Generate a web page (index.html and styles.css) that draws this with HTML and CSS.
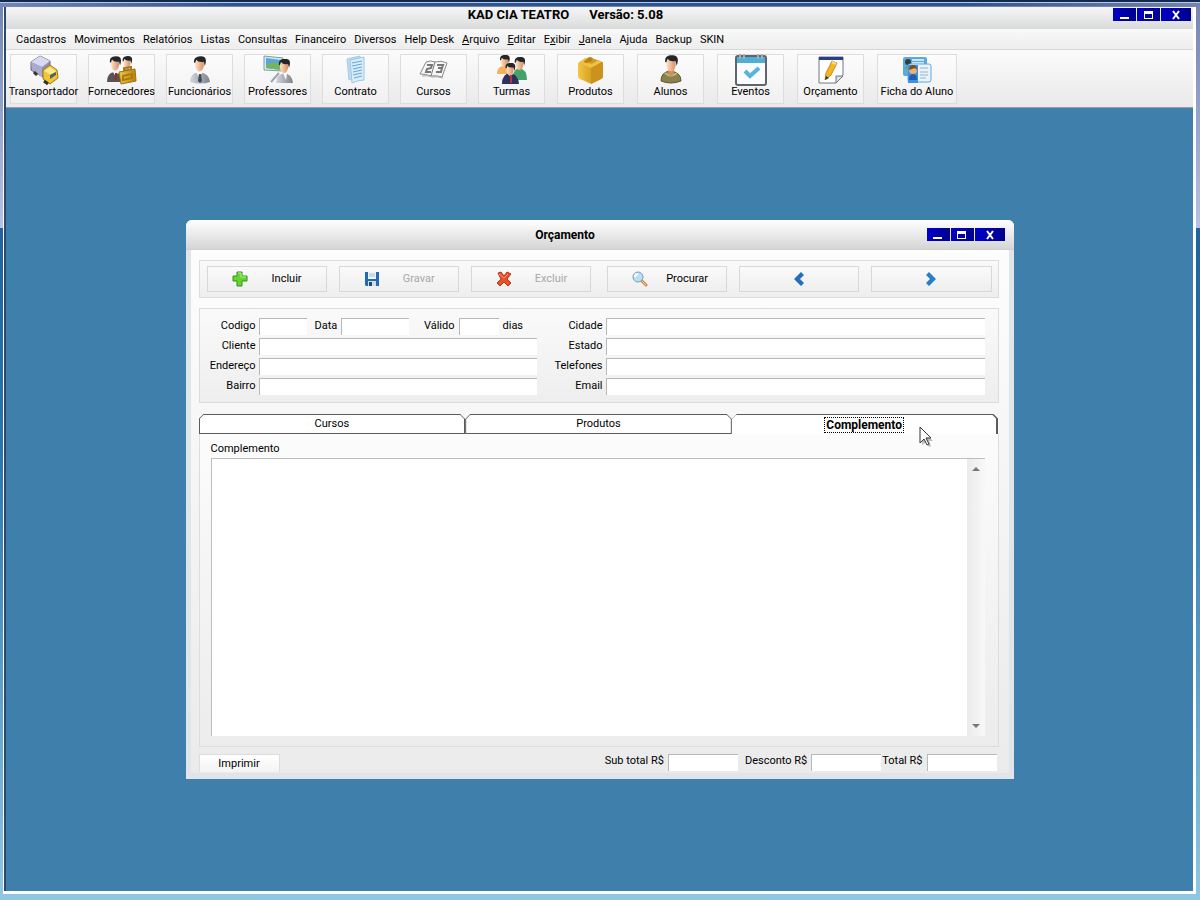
FILE: index.html
```
<!DOCTYPE html>
<html lang="pt-BR">
<head>
  <meta charset="UTF-8" />
  <meta name="viewport" content="width=device-width, initial-scale=1.0"/>
  <title>KAD CIA TEATRO</title>
  <link rel="stylesheet" href="styles.css">
</head>
<body>
  <svg class="defs" width="0" height="0" aria-hidden="true">
    <defs>
      <linearGradient id="skin" x1="0" x2="1"><stop offset="0" stop-color="#ffe2c4"/><stop offset="1" stop-color="#d98f62"/></linearGradient>
      <linearGradient id="gold" x1="0" x2="1"><stop offset="0" stop-color="#f3c63f"/><stop offset="1" stop-color="#b98010"/></linearGradient>
      <linearGradient id="suit" x1="0" x2="1"><stop offset="0" stop-color="#d3d7de"/><stop offset="1" stop-color="#7c828d"/></linearGradient>
      <symbol id="head" viewBox="0 0 14 16">
        <path d="M3 5q0-4 4-4 4 0 4 4v4q-1 5-4 5T3 9z" fill="url(#skin)"/>
        <path d="M2 6Q1 1 6 0q7-1 7 4 0 2-1 5l-1-4Q6 6 4 3L3 6z" fill="#25262a"/>
      </symbol>
      <symbol id="win-min" viewBox="0 0 12 10"><path d="M1 7h9v2H1z" fill="#fff"/></symbol>
      <symbol id="win-max" viewBox="0 0 12 10"><path d="M1 1h9v8H1zM2 4v4h7V4z" fill="#fff" fill-rule="evenodd"/></symbol>
      <symbol id="win-close" viewBox="0 0 12 10"><path d="M3 1l6 8M9 1L3 9" fill="none" stroke="#fff" stroke-width="2"/></symbol>
    </defs>
  </svg>

  <div class="app">
    <header class="titlebar">
      <h1><span>KAD CIA TEATRO</span><span>Versão: 5.08</span></h1>
      <div class="controls">
        <button aria-label="Minimizar"><svg width="12" height="10"><use href="#win-min"/></svg></button>
        <button aria-label="Maximizar"><svg width="12" height="10"><use href="#win-max"/></svg></button>
        <button class="close" aria-label="Fechar"><svg width="12" height="10"><use href="#win-close"/></svg></button>
      </div>
    </header>

    <nav class="menu">
      <a href="#">Cadastros</a>
      <a href="#">Movimentos</a>
      <a href="#">Relatórios</a>
      <a href="#">Listas</a>
      <a href="#">Consultas</a>
      <a href="#">Financeiro</a>
      <a href="#">Diversos</a>
      <a href="#">Help Desk</a>
      <a href="#"><u>A</u>rquivo</a>
      <a href="#"><u>E</u>ditar</a>
      <a href="#">E<u>x</u>ibir</a>
      <a href="#"><u>J</u>anela</a>
      <a href="#">Ajuda</a>
      <a href="#">Backup</a>
      <a href="#">SKIN</a>
    </nav>

    <div class="toolbar">
      <div class="tools">
        <button class="tool">
          <svg width="30" height="30" viewBox="0 0 30 30">
            <path d="M2 7 11 1l10 5v12l-7 4L2 15z" fill="#8e8fb4" stroke="#66688c"/>
            <path d="M2 7 11 1l10 5-8 6z" fill="#d9daf0"/>
            <path d="M2 7l11 5v10L3 15z" fill="#a9aacd"/>
            <path d="M14 15l7-5 7 5 1 8-8 6-7-5z" fill="#efc531" stroke="#a17a12"/>
            <path d="M15 16l6-4 6 4-5 4z" fill="#fbe98a"/>
            <path d="M21 20l6-3v3l-6 4z" fill="#53606e"/>
            <path d="M15 26l4 3M5 17l3 3" stroke="#333" stroke-width="3"/>
          </svg>
          <span>Transportador</span>
        </button>
        <button class="tool">
          <svg width="30" height="30" viewBox="0 0 30 30">
            <path d="M0 27q0-9 7-10 8 1 9 10z" fill="#5c5254"/>
            <path d="M15 20q1-6 6-7 5 1 6 8z" fill="#8a8d96"/>
            <path d="M6 17l3 5 2-5z" fill="#fff"/><path d="M8 18h2v7H8z" fill="#9b2f2b"/>
            <use href="#head" x="1" y="1" width="14" height="17"/>
            <use href="#head" x="14" y="1" width="12" height="14"/>
            <path d="M12 17l16-3 1 12-15 3z" fill="url(#gold)" stroke="#9a7410"/>
            <path d="M17 16v-3l7-1v3M16 21l9-2v4l-9 2z" fill="none" stroke="#a97b10" stroke-width="2"/>
          </svg>
          <span>Fornecedores</span>
        </button>
        <button class="tool">
          <svg width="30" height="30" viewBox="0 0 30 30">
            <path d="M5 27q0-9 9-10 10 1 11 10-9 3-20 0z" fill="url(#suit)"/>
            <path d="M11 17l3 5 4-5z" fill="#fff"/><path d="M14 19h2l1 7-2 2-2-2z" fill="#424a5a"/>
            <use href="#head" x="7" y="1" width="15" height="18"/>
          </svg>
          <span>Funcionários</span>
        </button>
        <button class="tool">
          <svg width="30" height="30" viewBox="0 0 30 30">
            <path d="M1 1l19 2v13L1 15z" fill="#d5e9f4" stroke="#7f9dad"/>
            <path d="M3 3l15 2v10L3 13z" fill="#58a6dc"/><path d="M3 10q7-5 15 0v5L3 13z" fill="#74b55d"/>
            <path d="M13 28q0-8 8-10 8 1 9 10z" fill="url(#suit)"/>
            <path d="M20 18l3 7 1-7z" fill="#fff"/>
            <use href="#head" x="14" y="4" width="14" height="16"/>
            <path d="M8 27l8-9" stroke="#9aa7b5" stroke-width="2"/>
          </svg>
          <span>Professores</span>
        </button>
        <button class="tool">
          <svg width="30" height="30" viewBox="0 0 30 30">
            <path d="M6 4l13-3v19L8 25z" fill="#bcdcf3" stroke="#a4cbea"/>
            <path d="M9 5l14-3v23q-6 0-12 3z" fill="#d8edfa" stroke="#9cc7e6"/>
            <path d="M11 8l10-2M11 11l10-2M12 14l9-2M12 17l9-2M12 20l9-2M13 23l8-2" stroke="#67a7d8"/>
          </svg>
          <span>Contrato</span>
        </button>
        <button class="tool">
          <svg width="30" height="30" viewBox="0 0 30 30">
            <path d="M1 19 7 7q5-2 9 0 6-2 12 1l-5 14q-6-2-11-1-5-2-11-2z" fill="#f7f7f7" stroke="#8a8a8a"/>
            <path d="M16 7l-4 14" stroke="#777"/>
            <path d="M8 10h5l-1 3-4 1-1 3h5M18 10h6l-1 3h-4M23 13l-1 4h-5" fill="none" stroke="#777" stroke-width="2"/>
            <path d="M3 21q6-1 10 1 5-1 11 1" fill="none" stroke="#aaa"/>
          </svg>
          <span>Cursos</span>
        </button>
        <button class="tool">
          <svg width="30" height="30" viewBox="0 0 30 30">
            <path d="M0 19q0-8 7-8t7 8z" fill="#f1b45d"/><path d="M16 25q-1-10 6-12 8 1 8 12z" fill="#43a369"/>
            <use href="#head" x="1" y="0" width="13" height="14"/>
            <use href="#head" x="16" y="2" width="13" height="15"/>
            <path d="M5 29q0-10 8-11 8 1 9 11z" fill="#2d315d"/><path d="M11 18l3 5 2-5z" fill="#fff"/><path d="M13 20h2v8h-2z" fill="#b33"/>
            <use href="#head" x="6" y="8" width="14" height="14"/>
          </svg>
          <span>Turmas</span>
        </button>
      </div>
      <div class="tools wide">
        <button class="tool">
          <svg width="30" height="30" viewBox="0 0 30 30">
            <path d="M2 9q0-2 3-3l8-4 11 4q3 1 3 3v12q0 2-2 3l-8 4q-2 1-4 0l-9-4q-2-1-2-3z" fill="url(#gold)"/>
            <path d="M3 8l6-5 3 2-2 3 6 1 6-4 4 2-11 6z" fill="#eec144"/>
            <path d="M15 13v16l10-5q2-1 2-3V7z" fill="#cb921c"/>
            <path d="M8 6l6-4 3 1-2 4-6 1" fill="#b98014"/>
          </svg>
          <span>Produtos</span>
        </button>
        <button class="tool">
          <svg width="30" height="30" viewBox="0 0 30 30">
            <path d="M5 26q0-9 9-10 11 1 11 10-10 4-20 0z" fill="#89824a" stroke="#60592c"/>
            <path d="M9 18q6 5 12 0" fill="none" stroke="#c0b879" stroke-width="2"/>
            <path d="M12 15h6v4l-3 2-3-2z" fill="#d48b5c"/>
            <use href="#head" x="7" y="0" width="16" height="19"/>
          </svg>
          <span>Alunos</span>
        </button>
        <button class="tool">
          <svg class="tall" width="32" height="32" viewBox="0 0 32 32">
            <rect x="1" y="2" width="30" height="29" rx="2" fill="#fafcfd" stroke="#5e666d" stroke-width="2"/>
            <path d="M2 3h28v6H2z" fill="#4eafd6"/>
            <path d="M5 0v5M9 0v5M23 0v5M27 0v5" stroke="#a9adb1" stroke-width="2"/>
            <path d="M10 17l5 5 9-8" fill="none" stroke="#55b5dc" stroke-width="4"/>
          </svg>
          <span>Eventos</span>
        </button>
        <button class="tool">
          <svg width="30" height="30" viewBox="0 0 30 30">
            <path d="M3 2h24v18l-7 8H3z" fill="#fff" stroke="#707780"/>
            <path d="M3 2h24v3H3z" fill="#263f88"/><path d="M20 28v-7h7z" fill="#dce1e7" stroke="#707780"/>
            <path d="M9 25l1-7 6-12 5 2-6 12z" fill="#f5b524" stroke="#c98a1a"/><path d="M9 25l1-4 3 2z" fill="#333"/><path d="M16 7l4 2" stroke="#f4dfa3" stroke-width="2"/>
          </svg>
          <span>Orçamento</span>
        </button>
        <button class="tool">
          <svg width="30" height="30" viewBox="0 0 30 30">
            <rect x="1" y="2" width="24" height="19" rx="2" fill="#5ba9e4"/>
            <path d="M10 5h12M10 8h12" stroke="#c9e5f8" stroke-width="2"/>
            <circle cx="6" cy="7" r="3" fill="#333f34"/><path d="M3 14q3-6 7 0" fill="#52a45c"/>
            <rect x="6" y="9" width="23" height="18" rx="2" fill="#e8f3fb" stroke="#66a7dc"/>
            <path d="M6 10h10v18H6z" fill="#3f92df"/><circle cx="11" cy="15" r="4" fill="#eeb06d"/><path d="M7 15q0-5 4-5t4 5l-2-2z" fill="#76501e"/><path d="M7 25q0-6 4-6t4 6z" fill="#1f5eb8"/>
            <path d="M18 13h8M18 17h8M18 20h8M18 23h6" stroke="#9db0bd"/>
          </svg>
          <span>Ficha do Aluno</span>
        </button>
      </div>
    </div>

    <main class="workspace">
      <section class="dialog">
        <header class="titlebar">
          <h2>Orçamento</h2>
          <div class="controls">
            <button aria-label="Minimizar"><svg width="12" height="10"><use href="#win-min"/></svg></button>
            <button aria-label="Maximizar"><svg width="12" height="10"><use href="#win-max"/></svg></button>
            <button class="close" aria-label="Fechar"><svg width="12" height="10"><use href="#win-close"/></svg></button>
          </div>
        </header>

        <div class="dialog-body">
          <div class="panel actions">
            <div class="action-group">
              <button>
                <svg width="16" height="16" viewBox="0 0 16 16"><path d="M5 1h5v4h5v5h-5v5H5v-5H1V5h4z" fill="#63d430" stroke="#35911f"/><path d="M6 2h3v4h5" fill="none" stroke="#b4f08c"/></svg>
                <span>Incluir</span>
              </button>
              <button disabled>
                <svg width="16" height="16" viewBox="0 0 16 16"><path d="M1 1h14v14H2l-1-1z" fill="#2469b4"/><path d="M4 1h8v7H4z" fill="#eef4fa"/><path d="M5 3h6M5 5h6" stroke="#a9bdd0"/><path d="M4 10h8v5H4z" fill="#d5dde6"/><path d="M5 11h3v4H5z" fill="#174b86"/></svg>
                <span>Gravar</span>
              </button>
              <button disabled>
                <svg width="16" height="16" viewBox="0 0 16 16"><path d="M2 2l3-1 3 4 3-4 4 2-4 5 4 4-3 3-4-4-4 4-3-3 4-4z" fill="#e9512b" stroke="#b93517"/><path d="M3 3l5 4 4-4" fill="none" stroke="#f99a78"/></svg>
                <span>Excluir</span>
              </button>
            </div>
            <div class="action-group">
              <button>
                <svg width="16" height="16" viewBox="0 0 16 16"><path d="M9 9l5 5" stroke="#d28b45" stroke-width="3" stroke-linecap="round"/><path d="M10 10l4 4" stroke="#f8cb91"/><circle cx="6" cy="6" r="5" fill="#b7e0f6" stroke="#7e9db5"/><path d="M3 6q0-3 3-3" fill="none" stroke="#fff" stroke-width="2"/></svg>
                <span>Procurar</span>
              </button>
              <button class="arrow" aria-label="Anterior"><svg width="16" height="16" viewBox="0 0 16 16"><path d="M10 1l3 3-4 4 4 4-3 3-7-7z" fill="#246fba"/></svg></button>
              <button class="arrow" aria-label="Próximo"><svg width="16" height="16" viewBox="0 0 16 16"><path d="M6 1 3 4l4 4-4 4 3 3 7-7z" fill="#287fc8"/></svg></button>
            </div>
          </div>

          <form class="panel fields">
            <div class="fields-left">
              <label for="codigo">Codigo</label>
              <div class="inline">
                <input type="text" id="codigo" class="w-codigo" />
                <label for="data">Data</label>
                <input type="text" id="data" class="w-data" />
                <label for="valido" class="l-valido">Válido</label>
                <input type="text" id="valido" class="w-valido" />
                <span>dias</span>
              </div>
              <label for="cliente">Cliente</label><input type="text" id="cliente" />
              <label for="endereco">Endereço</label><input type="text" id="endereco" />
              <label for="bairro">Bairro</label><input type="text" id="bairro" />
            </div>
            <div class="fields-right">
              <label for="cidade">Cidade</label><input type="text" id="cidade" />
              <label for="estado">Estado</label><input type="text" id="estado" />
              <label for="telefones">Telefones</label><input type="text" id="telefones" />
              <label for="email">Email</label><input type="text" id="email" />
            </div>
          </form>

          <div class="tabs" role="tablist">
            <button role="tab" aria-selected="false"><span>Cursos</span></button>
            <button role="tab" aria-selected="false"><span>Produtos</span></button>
            <button role="tab" aria-selected="true"><span>Complemento</span></button>
            <svg class="cursor" width="14" height="21" viewBox="0 0 14 21"><path d="M3 4v15l4-3 3 5 2-1-2-5h4z" fill="#bbb"/><path d="M1 1v16l4-4 3 6 2-1-3-6h5z" fill="#fff" stroke="#333"/></svg>
          </div>
          <div class="tab-panel">
            <label for="complemento">Complemento</label>
            <div class="memo">
              <textarea id="complemento"></textarea>
              <div class="scroll">
                <svg width="8" height="4"><path d="M0 4l4-4 4 4z" fill="#777"/></svg>
                <svg width="8" height="4"><path d="M0 0l4 4 4-4z" fill="#777"/></svg>
              </div>
            </div>
          </div>

          <footer class="totals">
            <button>Imprimir</button>
            <label>Sub total R$ <input type="text" /></label>
            <label>Desconto R$ <input type="text" /></label>
            <label class="total">Total R$ <input type="text" /></label>
          </footer>
        </div>
      </section>
    </main>
  </div>
</body>
</html>
```

FILE: styles.css
```
* { box-sizing: border-box; }
body {
  margin: 0;
  padding: 7px 4px 8px 3px;
  min-height: 100vh;
  display: flex;
  font-family: Roboto, "Liberation Sans", sans-serif;
  font-size: 11px;
  line-height: 14px;
  color: #000;
  background:
    linear-gradient(#12294f 0 2px, #b9cbe4 2px 3px, transparent 3px) top / 100% 7px no-repeat,
    linear-gradient(90deg, #7187b8, #2c538c 20%, #2c538c 80%, #7484ac) top / 100% 6px no-repeat,
    linear-gradient(#06304a, #06304a) bottom / 100% 2px no-repeat,
    linear-gradient(#7384b4, #b5c2e2) top / 100% 228px no-repeat,
    linear-gradient(#17538d, #2b75ad 50%, #90c8e2);
}
button, input, textarea { font: inherit; color: inherit; }
button { padding: 0; cursor: pointer; }
.defs { position: absolute; }

.app { flex: 1; display: flex; flex-direction: column; padding-left: 2px; border: 0 solid #fff; border-width: 0 3px 3px 1px; background: #2b4a6a; }

/* title bars */
.titlebar { display: grid; grid-template-columns: 1fr auto 1fr; align-items: center; height: 22px; padding-right: 2px; background: linear-gradient(#f6f6f6, #d9dada); }
h1, h2 { grid-column: 2; margin: 0; padding-right: 66px; font-size: 12px; line-height: 14px; font-weight: bold; }
h1 { display: flex; gap: 20px; font-size: 13px; }
.controls { justify-self: end; display: flex; gap: 1px; }
.controls button { display: grid; place-items: center; width: 23px; height: 13px; border: 0; background: linear-gradient(90deg, #0000c8, #00008c); }
.controls .close { width: 30px; }
.app > .titlebar { align-items: start; padding-top: 1px; }

.menu { display: flex; flex-wrap: wrap; gap: 0 8px; padding: 4px 10px 2px; background: linear-gradient(#f9f9f9, #ededed); border-bottom: 1px solid #d8d8d8; }
.menu a { color: #000; text-decoration: none; }

.toolbar { display: flex; flex-wrap: wrap; gap: 12px; padding: 4px 4px 3px; background: linear-gradient(#fbfbfb, #e9e9e9); border-bottom: 1px solid #9a9aa8; }
.tools { display: flex; gap: 11px; }
.wide { gap: 13px; }
.tool { display: flex; flex-direction: column; align-items: center; width: 67px; height: 50px; border: 1px solid #ddd; background: linear-gradient(#fcfcfc, #f0f0f0); white-space: nowrap; }
.wide .tool:last-child { width: 80px; }
.tall { margin: -1px 0; }

.workspace { flex: 1; padding: 112px 20px; background: #3e80ab; }

/* budget window */
.dialog { max-width: 828px; margin: 0 auto; background: #dfe5e8; border-radius: 6px 6px 0 0; overflow: hidden; }
.dialog .titlebar { height: 30px; padding-right: 9px; border-bottom: 1px solid #d0d0d0; background: linear-gradient(#fff, #d5d5d5); }
.dialog h2 { padding-right: 60px; }
.dialog-body { margin: 0 5px 6px; padding: 10px 10px 1px 8px; background: linear-gradient(#fdfdfd, #ebebeb); }
.panel { border: 1px solid #dcdcdc; background: linear-gradient(#fafafa, #eee); }

.actions { display: flex; gap: 16px; padding: 5px 6px 5px 7px; margin-bottom: 10px; }
.action-group { flex: 1; display: flex; gap: 12px; }
.action-group button { flex: 1; display: flex; align-items: center; height: 26px; border: 1px solid #d8d8d8; background: linear-gradient(#fafafa, #eee); }
.action-group svg { margin-left: 24px; }
.action-group span { flex: 1; text-align: center; }
.action-group button:disabled { color: #a8a8a8; }
.action-group .arrow { justify-content: center; }
.action-group .arrow svg { margin: 0; }

.fields { display: flex; gap: 14px; padding: 9px 13px 7px 4px; margin-bottom: 11px; }
.fields-left, .fields-right { display: grid; grid-template-columns: 52px 1fr; gap: 3px 3px; text-align: right; line-height: 16px; }
.fields-left { flex: 0 1 333px; }
.fields-right { flex: 1; }
.inline { display: flex; gap: 4px; }
input { min-width: 0; height: 17px; padding: 0 2px; border: 0 solid #b8b8b8; border-width: 1px 0 0 1px; background: #fff; }
.w-codigo { width: 48px; margin-right: 4px; }
.w-data { width: 68px; }
.w-valido { width: 40px; }
.l-valido { margin-left: auto; }
.inline span { width: 34px; text-align: left; }

.tabs { position: relative; display: grid; grid-template-columns: repeat(3, 1fr); }
.tabs button { height: 20px; padding: 1px; border: 0; background: #5c5c5c; clip-path: polygon(0 5px, 5px 0, calc(100% - 5px) 0, 100% 5px, 100% 100%, 0 100%); }
.tabs button span { display: grid; place-items: center; height: 18px; line-height: 18px; background: #fff; clip-path: polygon(0 4px, 4px 0, calc(100% - 4px) 0, 100% 4px, 100% 100%, 0 100%); }
.tabs [aria-selected="true"] { font-size: 12px; font-weight: bold; padding: 1px 2px 0 0; }
.tabs [aria-selected="true"] span { height: 19px; }
.tabs [aria-selected="true"] span::after { content: ""; position: absolute; width: 78px; height: 14px; border: 1px dotted #000; }
.cursor { position: absolute; left: 90%; top: 12px; }

.tab-panel { padding: 8px 13px 10px 11px; border: 1px solid #ddd; border-top: 0; background: linear-gradient(#fcfcfc, #ececec); }
.tab-panel label { display: block; margin-bottom: 2px; }
.memo { display: flex; height: 278px; border: 1px solid #bdbdbd; border-width: 1px 0 0 1px; background: #fff; }
textarea { flex: 1; min-width: 0; padding: 2px; border: 0; background: #fff; resize: none; }
.scroll { display: flex; flex-direction: column; justify-content: space-between; align-items: center; width: 18px; padding: 8px 0; background: linear-gradient(90deg, #ebebeb, #f8f8f8); }

.totals { display: flex; gap: 7px; margin-top: 7px; padding-right: 2px; }
.totals button { width: 81px; height: 18px; margin-right: auto; border: 1px solid #ddd; border-bottom: 0; background: linear-gradient(#fff, #f3f3f3); }
.totals label { display: flex; gap: 4px; }
.totals input { width: 70px; }
.totals .total { margin-left: -6px; }
```
